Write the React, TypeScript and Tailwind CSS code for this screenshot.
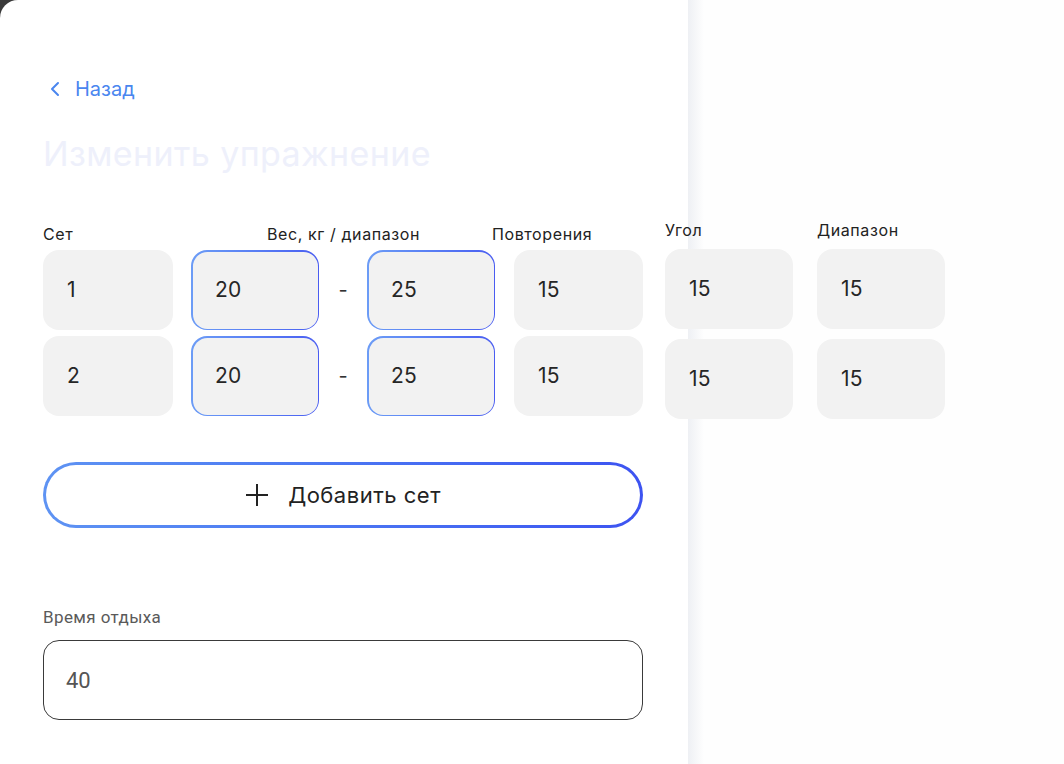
import React from "react";

const inter = { fontFamily: "Inter, 'Noto Sans', sans-serif" };

function Box({ value, blue }: { value: string; blue?: boolean }) {
  if (blue) {
    return (
      <div className="rounded-[16px] bg-gradient-to-r from-[#6c9cf6] to-[#4a5df1] p-[1.5px]">
        <div className="flex h-[77px] items-center rounded-[14.5px] bg-[#f2f2f2] pl-[22.5px] text-[21px] tracking-[0.3px] text-[#262626]">
          {value}
        </div>
      </div>
    );
  }
  return (
    <div className="flex h-[80px] items-center rounded-[16px] bg-[#f2f2f2] pl-[24px] text-[21px] tracking-[0.3px] text-[#262626]">
      {value}
    </div>
  );
}

function RowA({ set }: { set: string }) {
  return (
    <div className="flex items-center">
      <div className="w-[130px]"><Box value={set} /></div>
      <div className="ml-[18px] w-[128px]"><Box value="20" blue /></div>
      <div className="flex w-[48px] justify-center text-[20px] text-[#333]">-</div>
      <div className="w-[128px]"><Box value="25" blue /></div>
      <div className="ml-[19px] w-[129px]"><Box value="15" /></div>
    </div>
  );
}

export default function App() {
  return (
    <div className="h-[764px] w-[1064px] overflow-hidden bg-[#3a3a3a]" style={inter}>
      <div className="h-full w-full rounded-tl-[18px] bg-[linear-gradient(to_right,#ffffff_688px,#eef0f4_688px,#fefefe_704px)] pl-[43px] pt-[77px]">
        <div className="flex h-[24px] items-center text-[20px] text-[#4a86ef]">
          <svg width="12" height="16" viewBox="0 0 12 16" className="ml-[6px]" fill="none">
            <path d="M9 2 L3 8 L9 14" stroke="#4a86ef" strokeWidth="2" strokeLinecap="round" strokeLinejoin="round" />
          </svg>
          <span className="ml-[14px]">Назад</span>
        </div>
        <div className="mt-[33px] h-[40px] text-[34px] leading-[40px] tracking-[0.4px] text-[#eef0fb]">Изменить упражнение</div>

        <div className="mt-[46px] flex items-start text-[#222]">
          <div className="flex flex-col pt-[4px]">
            <div className="flex h-[20px] text-[16px] leading-[20px] tracking-[0.6px]">
              <span className="w-[224px]">Сет</span>
              <span className="w-[225px]">Вес, кг / диапазон</span>
              <span>Повторения</span>
            </div>
            <div className="mt-[6px] flex flex-col gap-[6px]">
              <RowA set="1" />
              <RowA set="2" />
            </div>
          </div>
          <div className="ml-[22px] flex w-[128px] flex-col">
            <div className="h-[20px] text-[16px] leading-[20px] tracking-[0.6px]">Угол</div>
            <div className="mt-[9px] flex flex-col gap-[10px]">
              <Box value="15" />
              <Box value="15" />
            </div>
          </div>
          <div className="ml-[24px] flex w-[128px] flex-col">
            <div className="h-[20px] text-[16px] leading-[20px] tracking-[0.6px]">Диапазон</div>
            <div className="mt-[9px] flex flex-col gap-[10px]">
              <Box value="15" />
              <Box value="15" />
            </div>
          </div>
        </div>

        <div className="mt-[43px] w-[600px] rounded-full bg-gradient-to-r from-[#5e93f3] to-[#3d53f1] p-[3px]">
          <div className="flex h-[60px] items-center justify-center rounded-full bg-white text-[22px] tracking-[0.5px] text-[#222]">
            <svg width="24" height="24" viewBox="0 0 24 24" fill="none">
              <path d="M12 1 V23 M1 12 H23" stroke="#222" strokeWidth="2" />
            </svg>
            <span className="ml-[19px]">Добавить сет</span>
          </div>
        </div>

        <div className="mt-[79px] h-[20px] text-[17px] leading-[20px] tracking-[0.4px] text-[#5a5a5a]" style={{ fontFamily: "Roboto, sans-serif" }}>
          Время отдыха
        </div>
        <div
          className="mt-[13px] flex h-[80px] w-[600px] items-center rounded-[16px] border-[1.5px] border-[#3a3a3a] pl-[22px] text-[22px] text-[#555]"
          style={{ fontFamily: "Roboto, sans-serif" }}
        >
          40
        </div>
      </div>
    </div>
  );
}
